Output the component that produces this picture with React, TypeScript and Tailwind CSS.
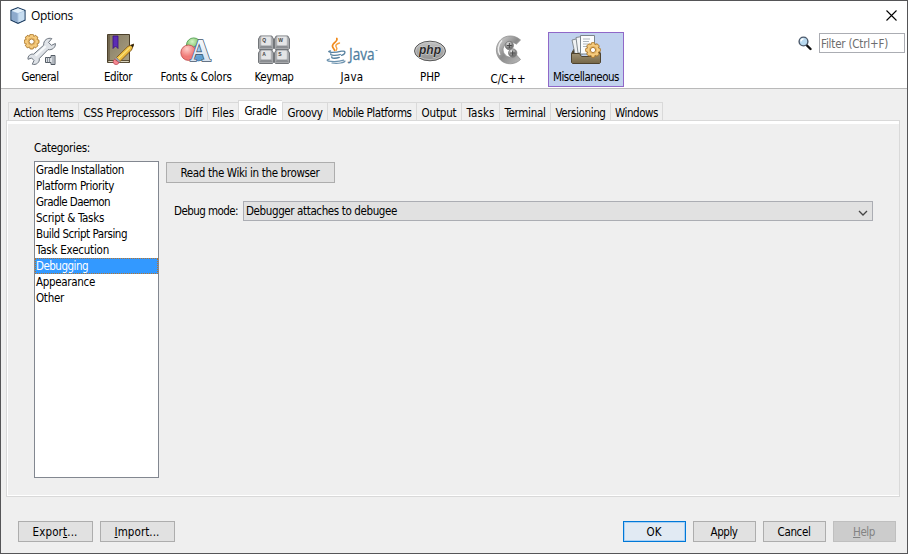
import { useLayoutEffect, useRef, type ReactNode } from "react";

/** One line of dialog text, tracked so that it fills exactly `w` pixels. */
function Label({ children, w, className = "" }: { children: ReactNode; w: number; className?: string }) {
  const ref = useRef<HTMLSpanElement>(null);
  useLayoutEffect(() => {
    const el = ref.current;
    if (!el) return;
    el.style.letterSpacing = "0px";
    const count = (el.textContent ?? "").length;
    const natural = el.getBoundingClientRect().width;
    el.style.letterSpacing = `${(w - natural) / count}px`;
  }, [w, children]);
  return (
    <span ref={ref} className={`inline-block shrink-0 whitespace-nowrap ${className}`}>
      {children}
    </span>
  );
}

function Gear({ cx, cy }: { cx: number; cy: number }) {
  const teeth = [0, 45, 90, 135, 180, 225, 270, 315];
  return (
    <g transform={`translate(${cx} ${cy})`}>
      {teeth.map((a) => (
        <rect key={a} x="-2" y="-7.400" width="4" height="4" rx="1.300" fill="#f4c878" stroke="#a56f22" strokeWidth=".9" transform={`rotate(${a})`} />
      ))}
      <circle r="5.600" fill="#f6cd82" />
      <circle r="3.700" fill="none" stroke="#e0a850" strokeWidth=".7" />
      <circle r="2.600" fill="#fff" stroke="#a56f22" strokeWidth=".9" />
    </g>
  );
}

function GeneralIcon() {
  return (
    <svg width="32" height="32" viewBox="0 0 32 32">
      <Gear cx={7.6} cy={7.6} />
      <path
        d="M27.800 4.600C24 3.300 19.200 6 19.700 11.200L9.600 20.200C6.500 19.500 3.500 22 4 25.300L7.600 24L10 26.500L8.300 30.200C12 31.500 16 28.300 15.300 24.500L24 15.600C28 16.400 31.800 13.500 31.400 9.500L27.500 11.300L24.500 8.500Z"
        fill="#dfe3e8" stroke="#6c747e" strokeWidth="1" strokeLinejoin="round"
      />
      <path d="M11.500 21.800L21.700 12.300" stroke="#f8fafb" strokeWidth="2" />
      <path d="M21.500 23.500h5.500v-2h4v9h-4v-2h-5.500z" fill="#dce0e5" stroke="#535b64" />
      <path d="M23.500 23.500v5M25.500 23.500v5M29 22v8" stroke="#727b85" strokeWidth=".8" />
    </svg>
  );
}

function EditorIcon() {
  return (
    <svg width="32" height="32" viewBox="0 0 32 32">
      <defs>
        <linearGradient id="book" x2="1" y2="1"><stop stopColor="#847a62" /><stop offset="1" stopColor="#aaa184" /></linearGradient>
        <linearGradient id="wood" x2="1" y2="1"><stop stopColor="#ffe767" /><stop offset="1" stopColor="#e09b1e" /></linearGradient>
      </defs>
      <path d="M5.500.5h22v28h-22z" fill="url(#book)" stroke="#4c402b" />
      <path d="M7 1v26.500M6 26.500h21" stroke="#5b4f38" />
      <path d="M6.500 27.600h20" stroke="#dfd9c4" />
      <path d="M11 2h5v12.500l-2.500-2.500l-2.500 2.500z" fill="#5b2bb5" stroke="#371080" strokeWidth=".8" />
      <path d="M14.500 23.500L26 12.300L32 10L29.500 16L18 27.500z" fill="url(#wood)" stroke="#7a541a" strokeWidth=".9" />
      <path d="M16.500 24.800L28 13.500" stroke="#fff29a" strokeWidth="1" />
      <path d="M28.500 11.300L32 10L30.700 13.500z" fill="#252018" />
      <path d="M13.800 24.200l4 3.800" stroke="#9b9eac" strokeWidth="2" />
      <path d="M12.700 25.200c-2 1.500-2 4 0 5c2 1 3.500-.3 4.400-1.500z" fill="#f58791" stroke="#b33b49" strokeWidth=".7" />
    </svg>
  );
}

function FontsIcon() {
  return (
    <svg width="34" height="32" viewBox="-1 0 34 32">
      <defs>
        <radialGradient id="fg" cx=".4" cy=".25"><stop stopColor="#d4f5c5" /><stop offset="1" stopColor="#72bf60" /></radialGradient>
        <radialGradient id="fr" cx=".4" cy=".25"><stop stopColor="#ffd0ca" /><stop offset="1" stopColor="#f07b78" /></radialGradient>
        <radialGradient id="fb" cx=".4" cy=".25"><stop stopColor="#b5d9f4" /><stop offset="1" stopColor="#609fd3" /></radialGradient>
        <linearGradient id="fa" x2="0" y2="1"><stop stopColor="#fff" /><stop offset="1" stopColor="#cedcec" /></linearGradient>
      </defs>
      <circle cx="13.700" cy="11.200" r="7.300" fill="url(#fg)" stroke="#449444" strokeWidth=".8" />
      <circle cx="18.500" cy="19.200" r="7.700" fill="url(#fb)" stroke="#3974a8" strokeWidth=".8" />
      <circle cx="8.500" cy="18.700" r="7.700" fill="url(#fr)" stroke="#bd4a4a" strokeWidth=".8" />
      <text x="10" y="27" textLength="21" lengthAdjust="spacingAndGlyphs" fontFamily="Liberation Serif, serif" fontWeight="700" fontSize="32" fill="none" stroke="#42556b" strokeWidth="1.600" className="leading-none">A</text>
      <text x="10" y="27" textLength="21" lengthAdjust="spacingAndGlyphs" fontFamily="Liberation Serif, serif" fontWeight="700" fontSize="32" fill="url(#fa)">A</text>
    </svg>
  );
}

function Key({ x, y, c }: { x: number; y: number; c: string }) {
  return (
    <g transform={`translate(${x} ${y})`}>
      <path d="M2.200.5h11.600l1.700 3v9.500l-1 1h-13l-1-1v-9.500z" fill="#a6a8ab" stroke="#73767a" />
      <path d="M1.500 12.500L3.500 9.500h9l2 3z" fill="#8b8e92" />
      <rect x="3" y="1" width="10" height="9" rx="1" fill="#e4e5e6" stroke="#c3c5c7" strokeWidth=".6" />
      <text x="4.200" y="6.300" fontFamily="Liberation Sans, sans-serif" fontWeight="700" fontSize="5" fill="#444">{c}</text>
    </g>
  );
}

function KeymapIcon() {
  return (
    <svg width="32" height="32" viewBox="0 0 32 32">
      <Key x={0} y={1.5} c="Q" />
      <Key x={16} y={1.5} c="W" />
      <Key x={0} y={15.5} c="A" />
      <Key x={16} y={15.5} c="S" />
    </svg>
  );
}

function JavaIcon() {
  return (
    <svg width="52" height="32" viewBox="0 0 52 32">
      <g fill="none" strokeLinecap="round">
        <path d="M10.800 4.500c1.700 3-5.200 4.500-4.300 8c.3 1.500 1.700 2.300 2.200 4" stroke="#f08a1c" strokeWidth="1.700" />
        <path d="M13.500 9c-3.500 1.200-4.600 2.600-3 4.500c.8 1 .5 1.800-.3 2.800" stroke="#f5a040" strokeWidth="1.400" />
        <path d="M4.500 16.800c-5.500 1.500 3 2.500 11 .3M4.800 19.800c-1 2 6 1.800 9.500.7M5.800 22.800c-1 1.900 4.500 1.800 7.500.6M16.500 17.200c3.500-.8 3.300 3-1 4.200" stroke="#56809f" strokeWidth="1.300" />
        <path d="M3.500 25c-8 2.400 7 3.600 14.200 1.100M6 29c6 .8 12.500-.2 13-2" stroke="#6c92ae" strokeWidth="1.200" />
      </g>
      <text x="23" y="25.500" textLength="25.500" lengthAdjust="spacingAndGlyphs" fontFamily="Open Sans, sans-serif" fontSize="15.500" fill="#4d7d9e" stroke="#4d7d9e" strokeWidth=".3">Java</text>
      <path d="M49.500 16.500h2" stroke="#7ba0bb" />
    </svg>
  );
}

function PhpIcon() {
  return (
    <svg width="32" height="32" viewBox="0 0 32 32">
      <defs><linearGradient id="php" x2="0" y2="1"><stop stopColor="#c2c2c2" /><stop offset="1" stopColor="#8f8f8f" /></linearGradient></defs>
      <ellipse cx="16" cy="17" rx="15.500" ry="9.800" fill="url(#php)" stroke="#5b5b5b" />
      <ellipse cx="16" cy="17" rx="14.300" ry="8.600" fill="none" stroke="#ccc" strokeWidth=".7" />
      <text x="5" y="20" textLength="22" lengthAdjust="spacingAndGlyphs" fontFamily="Liberation Sans, sans-serif" fontWeight="700" fontStyle="italic" fontSize="12.500" fill="#2b2b2b" stroke="#d8d8d8" strokeWidth="1" paintOrder="stroke">php</text>
    </svg>
  );
}

function CppIcon() {
  return (
    <svg width="32" height="32" viewBox="0 0 32 32">
      <defs>
        <linearGradient id="cg" x2="1" y2="1"><stop stopColor="#dedede" /><stop offset=".5" stopColor="#8b8b8b" /><stop offset="1" stopColor="#bbb" /></linearGradient>
        <radialGradient id="ball" cx=".4" cy=".3"><stop stopColor="#eee" /><stop offset="1" stopColor="#777" /></radialGradient>
      </defs>
      <path d="M28.500 6C23 .8 13.800.5 8.500 6C3 11.500 3 20.500 8.500 26c5.300 5.200 14.500 5 20-.5l-4.200-4.800c-3.500 3.400-8 3.300-11 .2c-3-3-3-7.500 0-10.500c3-2.900 8-2.900 11-.2z" fill="url(#cg)" stroke="#8e8e8e" strokeWidth=".8" />
      <path d="M10 6.500C6 10.500 5.200 16.500 8 21" fill="none" stroke="#eee" strokeWidth="1.300" />
      <circle cx="17.300" cy="11.500" r="4.200" fill="url(#ball)" stroke="#777" strokeWidth=".7" />
      <circle cx="20.700" cy="19" r="4.200" fill="url(#ball)" stroke="#777" strokeWidth=".7" />
      <path d="M14.800 11.500h5M17.300 9v5M18.200 19h5M20.700 16.500v5" stroke="#484848" strokeWidth="1.100" />
    </svg>
  );
}

function MiscIcon() {
  return (
    <svg width="32" height="32" viewBox="0 0 32 32">
      <defs><linearGradient id="tray" x2="0" y2="1"><stop stopColor="#9e9072" /><stop offset="1" stopColor="#746647" /></linearGradient></defs>
      <path d="M1.500 19.500L4 15h24l2.500 4.500z" fill="#4e432e" stroke="#4e432e" />
      <path d="M2 6l8-2l3 16H5z" fill="#eef1f3" stroke="#838b91" />
      <path d="M6 3.500l9-1.500l2 17H8z" fill="#f4f6f7" stroke="#838b91" />
      <path d="M10.500 1.500h14V20h-14z" fill="#fcfdfd" stroke="#7b858c" />
      <path d="M13 5h7M13 7.500h6M13 10h5M13 12.500h4" stroke="#adb5bb" />
      <path d="M1.500 19.500h8l2 3h9l2-3h8v9l-1 1H2.500l-1-1z" fill="url(#tray)" stroke="#4e432e" />
      <Gear cx={23} cy={16} />
    </svg>
  );
}

const sections: { name: string; w: number; icon: ReactNode; low?: boolean; selected?: boolean }[] = [
  { name: "General", w: 37, icon: <GeneralIcon /> },
  { name: "Editor", w: 28, icon: <EditorIcon /> },
  { name: "Fonts & Colors", w: 71, icon: <FontsIcon /> },
  { name: "Keymap", w: 39, icon: <KeymapIcon /> },
  { name: "Java", w: 23, icon: <JavaIcon /> },
  { name: "PHP", w: 20, icon: <PhpIcon /> },
  { name: "C/C++", w: 35, icon: <CppIcon />, low: true },
  { name: "Miscellaneous", w: 66, icon: <MiscIcon />, selected: true },
];

const tabs: { name: string; text: number; box: string }[] = [
  { name: "Action Items", text: 60, box: "w-[70px]" },
  { name: "CSS Preprocessors", text: 91, box: "w-[101px]" },
  { name: "Diff", text: 18, box: "w-[28px]" },
  { name: "Files", text: 22, box: "w-[31px]" },
  { name: "Gradle", text: 32, box: "w-[44px]" },
  { name: "Groovy", text: 35, box: "w-[45px]" },
  { name: "Mobile Platforms", text: 79, box: "w-[89px]" },
  { name: "Output", text: 35, box: "w-[45px]" },
  { name: "Tasks", text: 28, box: "w-[38px]" },
  { name: "Terminal", text: 41, box: "w-[51px]" },
  { name: "Versioning", text: 50, box: "w-[60px]" },
  { name: "Windows", text: 43, box: "w-[53px]" },
];

const categories: [string, number][] = [
  ["Gradle Installation", 88],
  ["Platform Priority", 78],
  ["Gradle Daemon", 74],
  ["Script & Tasks", 68],
  ["Build Script Parsing", 91],
  ["Task Execution", 73],
  ["Debugging", 52],
  ["Appearance", 59],
  ["Other", 28],
];

function Button({ children, w, className }: { children: ReactNode; w: number; className: string }) {
  return (
    <button className={`flex h-[21px] items-center justify-center border pr-px leading-[14px] ${className}`}>
      <Label w={w}>{children}</Label>
    </button>
  );
}

export default function App() {
  return (
    <div className="flex h-[554px] w-[908px] flex-col overflow-hidden border border-[#555557] bg-[#efefef] font-['DejaVu_Sans_Condensed','DejaVu_Sans',sans-serif] text-[11.5px] leading-4 text-black">
      <header className="h-[88px] shrink-0 border-b border-[#b9b9b9] bg-white">
        <div className="flex h-[31px] items-center pr-[10px] pl-[9px]">
          <svg width="16" height="17" viewBox="0 0 16 17" className="mt-[-2px]">
            <path d="M8 .7L15 3.500V13L8 16.300L1 13V3.500z" fill="#a9c4e0" stroke="#1c3c60" strokeWidth="1.200" />
            <path d="M8 1.200L14.300 3.700L8 6L1.700 3.700z" fill="#e3f0fa" />
            <path d="M1.600 4.300L7.500 6.500V15.500L1.600 12.700z" fill="#8daacc" />
            <path d="M8.500 6.500L14.400 4.300v8.400L8.500 15.500z" fill="#c7ddf1" />
          </svg>
          <Label w={42} className="mt-[-1px] ml-[5px] font-['Open_Sans',sans-serif] text-[12px]">Options</Label>
          <svg width="11" height="11" viewBox="0 0 11 11" className="mt-[-3px] ml-auto">
            <path d="M.5.5l10 10M10.500.5l-10 10" stroke="#000" strokeWidth="1.100" />
          </svg>
        </div>
        <div className="flex items-start">
          <nav className="flex gap-[2px] pl-px">
            {sections.map((s) => (
              <div
                key={s.name}
                className={`flex h-[55px] w-[76px] flex-col items-center border pt-px ${s.selected ? "border-[#9068c8] bg-[#c1d2ee]" : "border-transparent"}`}
              >
                <div className="h-[32px]">{s.icon}</div>
                <Label w={s.w} className={s.low ? "mt-[5px]" : "mt-[3px]"}>{s.name}</Label>
              </div>
            ))}
          </nav>
          <div className="mt-px ml-auto flex items-start pr-[2px]">
            <svg width="14" height="15" viewBox="0 0 14 15" className="mt-[3px] mr-[7px]">
              <path d="M8.500 9l4 4" stroke="#111" strokeWidth="2.400" strokeLinecap="round" />
              <circle cx="5.500" cy="5.500" r="4.400" fill="#b9daf0" stroke="#4d5a6b" strokeWidth="1.400" />
              <path d="M3 5.500c0-1.500 1-2.500 2.500-2.500" fill="none" stroke="#fff" strokeWidth="1.300" />
            </svg>
            <div className="flex h-5 w-[86px] items-center border border-[#abadb3] bg-white pt-px pl-px text-[#6d6d6d]">
              <Label w={67}>Filter (Ctrl+F)</Label>
            </div>
          </div>
        </div>
      </header>

      <div className="mt-[11px] flex h-[21px] shrink-0 items-end pl-[7px]">
        {tabs.map((t, i) => (
          <div
            key={t.name}
            className={`flex justify-center border-t border-l border-[#d9d9d9] ${t.box} ${
              t.name === "Gradle" ? "h-[21px] bg-white pt-[2px]" : `mb-px h-[18px] pt-[2px] ${i === 11 ? "border-r" : ""}`
            }`}
          >
            <Label w={t.text}>{t.name}</Label>
          </div>
        ))}
      </div>

      <main className="mt-[-1px] mr-[7px] ml-[5px] h-[377px] shrink-0 border border-[#d9d9d9]">
        <div className="flex h-full flex-col border-b border-l border-white">
          <div className="h-[3px] shrink-0 bg-white" />
          <div className="flex pt-[16px] pl-[26px]">
            <section className="flex w-[125px] flex-col">
              <Label w={56} className="self-start">Categories:</Label>
              <ul className="mt-[5px] h-[317px] border border-[#828790] bg-white">
                {categories.map(([name, w]) => (
                  <li
                    key={name}
                    className={`flex h-4 items-center ${
                      name === "Debugging" ? "border border-dotted border-[#b8742c] bg-[#3399ff] text-white" : "pl-px"
                    }`}
                  >
                    <Label w={w}>{name}</Label>
                  </li>
                ))}
              </ul>
            </section>
            <section className="ml-[7px] pt-[22px]">
              <Button w={139} className="w-[169px] border-[#adadad] bg-[#e1e1e1]">Read the Wiki in the browser</Button>
              <div className="mt-[18px] flex items-center pl-2">
                <Label w={64} className="mr-[5px]">Debug mode:</Label>
                <div className="flex h-5 w-[630px] items-center justify-between border border-[#abadb3] bg-[#e1e1e1] pr-[4px] pl-[2px]">
                  <Label w={151}>Debugger attaches to debugee</Label>
                  <svg width="10" height="6" viewBox="0 0 10 6" className="mt-[3px]">
                    <path d="M1 1l4 4l4-4" fill="none" stroke="#444" strokeWidth="1.300" />
                  </svg>
                </div>
              </div>
            </section>
          </div>
        </div>
      </main>

      <footer className="mt-[24px] flex gap-[7px] pr-[11px] pl-[17px]">
        <Button w={45} className="w-[75px] border-[#adadad] bg-[#e1e1e1]">Expor<u>t</u>...</Button>
        <Button w={45} className="w-[75px] border-[#adadad] bg-[#e1e1e1]"><u>I</u>mport...</Button>
        <Button w={15} className="ml-auto w-[63px] border-[#0078d7] bg-[#e1eaf3] shadow-[inset_0_0_0_1px_#a9d1f5]">OK</Button>
        <Button w={27} className="w-[63px] border-[#adadad] bg-[#e1e1e1]">Apply</Button>
        <Button w={33} className="w-[63px] border-[#adadad] bg-[#e1e1e1]">Cancel</Button>
        <Button w={22} className="w-[63px] border-[#bfbfbf] bg-[#cccccc] text-[#838383]"><u>H</u>elp</Button>
      </footer>
    </div>
  );
}
